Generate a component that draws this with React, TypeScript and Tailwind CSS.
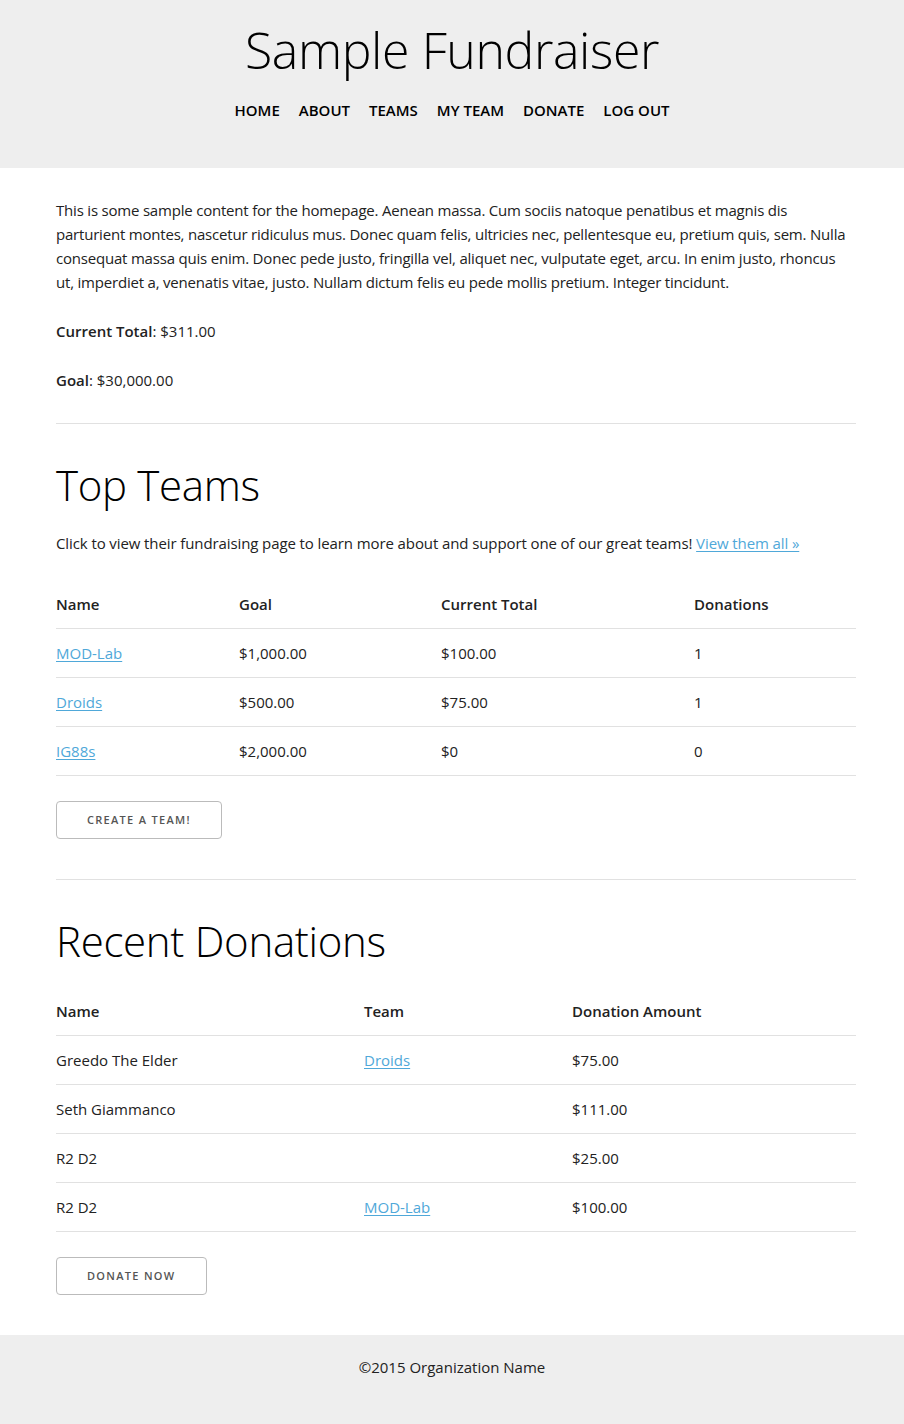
import React from 'react';

const font = { fontFamily: '"Open Sans", "Liberation Sans", sans-serif' };

const navItems = ['Home', 'About', 'Teams', 'My Team', 'Donate', 'Log Out'];

const teams = [
  { name: 'MOD-Lab', goal: '$1,000.00', total: '$100.00', donations: '1' },
  { name: 'Droids', goal: '$500.00', total: '$75.00', donations: '1' },
  { name: 'IG88s', goal: '$2,000.00', total: '$0', donations: '0' },
];

const donations = [
  { name: 'Greedo The Elder', team: 'Droids', amount: '$75.00' },
  { name: 'Seth Giammanco', team: '', amount: '$111.00' },
  { name: 'R2 D2', team: '', amount: '$25.00' },
  { name: 'R2 D2', team: 'MOD-Lab', amount: '$100.00' },
];

const th = 'text-left font-semibold py-3 px-[15px] border-b border-[#e1e1e1] first:pl-0 last:pr-0';
const td = 'text-left py-3 px-[15px] border-b border-[#e1e1e1] first:pl-0 last:pr-0';
const link = 'text-[#4fa8d9] underline underline-offset-2';

const Button = ({ children }: { children: React.ReactNode }) => (
  <button className="h-[38px] px-[30px] border border-[#bbb] rounded-[4px] text-[11px] font-semibold tracking-[1.3px] uppercase text-[#555] bg-transparent">
    {children}
  </button>
);

const App = () => {
  return (
    <div className="min-h-screen bg-white text-[#222] text-[15px] leading-6" style={font}>
      <header className="bg-[#eee] h-[168px] pt-5 text-center">
        <h1 className="text-[50px] leading-[60px] font-light text-black tracking-[-0.4px]">Sample Fundraiser</h1>
        <nav className="mt-[18px] flex justify-center gap-[19px]">
          {navItems.map(item => (
            <a key={item} className="uppercase font-semibold text-black text-[15px]">
              {item}
            </a>
          ))}
        </nav>
      </header>

      <main className="ml-[56px] w-[800px] pt-[30px]">
        <p className="mb-[25px] tracking-[-0.2px]">
          This is some sample content for the homepage. Aenean massa. Cum sociis natoque penatibus et magnis dis parturient montes, nascetur ridiculus mus. Donec quam felis, ultricies nec, pellentesque eu, pretium quis, sem. Nulla consequat massa quis enim. Donec pede justo, fringilla vel, aliquet nec, vulputate eget, arcu. In enim justo, rhoncus ut, imperdiet a, venenatis vitae, justo. Nullam dictum felis eu pede mollis pretium. Integer tincidunt.
        </p>
        <p className="mb-[25px]">
          <strong className="font-semibold">Current Total</strong>: $311.00
        </p>
        <p>
          <strong className="font-semibold">Goal</strong>: $30,000.00
        </p>

        <hr className="mt-[31px] mb-[35px] border-t border-[#e1e1e1]" />

        <h2 className="text-[42px] leading-[52px] font-light text-black tracking-[-0.3px] mb-5">Top Teams</h2>
        <p className="mb-[25px] tracking-[-0.1px]">
          Click to view their fundraising page to learn more about and support one of our great teams!{' '}
          <a className={link}>View them all »</a>
        </p>

        <table className="w-full border-collapse mb-[25px]">
          <thead>
            <tr>
              <th className={`${th} w-[168px]`}>Name</th>
              <th className={`${th} w-[202px]`}>Goal</th>
              <th className={`${th} w-[253px]`}>Current Total</th>
              <th className={th}>Donations</th>
            </tr>
          </thead>
          <tbody>
            {teams.map(t => (
              <tr key={t.name}>
                <td className={td}><a className={link}>{t.name}</a></td>
                <td className={td}>{t.goal}</td>
                <td className={td}>{t.total}</td>
                <td className={td}>{t.donations}</td>
              </tr>
            ))}
          </tbody>
        </table>

        <Button>Create a Team!</Button>

        <hr className="mt-10 mb-[35px] border-t border-[#e1e1e1]" />

        <h2 className="text-[42px] leading-[52px] font-light text-black tracking-[-0.3px] mb-5">Recent Donations</h2>

        <table className="w-full border-collapse mb-[25px]">
          <thead>
            <tr>
              <th className={`${th} w-[293px]`}>Name</th>
              <th className={`${th} w-[208px]`}>Team</th>
              <th className={th}>Donation Amount</th>
            </tr>
          </thead>
          <tbody>
            {donations.map((d, i) => (
              <tr key={i}>
                <td className={td}>{d.name}</td>
                <td className={td}>{d.team && <a className={link}>{d.team}</a>}</td>
                <td className={td}>{d.amount}</td>
              </tr>
            ))}
          </tbody>
        </table>

        <Button>Donate Now</Button>
      </main>

      <footer className="mt-10 bg-[#eee] pt-5 pb-[45px] text-center">
        <p>©2015 Organization Name</p>
      </footer>
    </div>
  );
};

export default App;
